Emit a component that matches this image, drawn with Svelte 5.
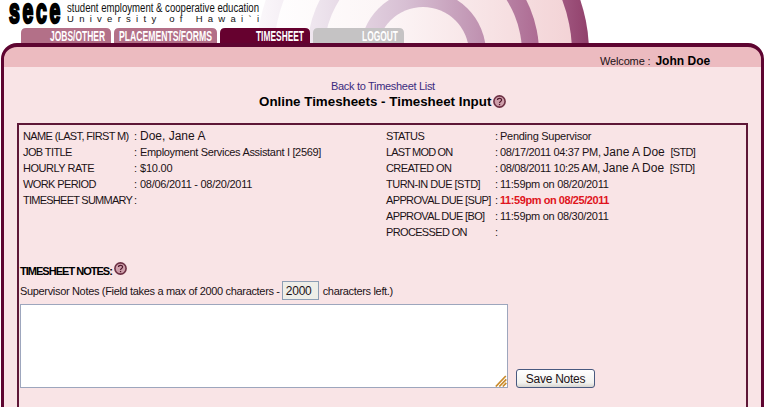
<script>
  const left = [
    { label: 'NAME (LAST, FIRST M)', ls: -0.64, parts: [{ t: 'Doe, Jane A', big: true }] },
    { label: 'JOB TITLE', ls: -0.6, parts: [{ t: 'Employment Services Assistant I [2569]', ls: -0.32 }] },
    { label: 'HOURLY RATE', ls: -0.48, parts: [{ t: '$10.00', ls: -0.2 }] },
    { label: 'WORK PERIOD', ls: -0.6, parts: [{ t: '08/06/2011 - 08/20/2011', ls: -0.27 }] },
    { label: 'TIMESHEET SUMMARY', ls: -0.75, parts: [] }
  ];
  const right = [
    { label: 'STATUS', ls: -0.6, parts: [{ t: 'Pending Supervisor', ls: -0.27 }] },
    { label: 'LAST MOD ON', ls: -0.85, parts: [{ t: '08/17/2011 04:37 PM, ', ls: -0.34 }, { t: 'Jane A Doe ', big: true }, { t: ' [STD]', ls: -0.7 }] },
    { label: 'CREATED ON', ls: -0.6, parts: [{ t: '08/08/2011 10:25 AM, ', ls: -0.34 }, { t: 'Jane A Doe ', big: true }, { t: ' [STD]', ls: -0.7 }] },
    { label: 'TURN-IN DUE [STD]', ls: -0.5, parts: [{ t: '11:59pm on 08/20/2011', ls: -0.29 }] },
    { label: 'APPROVAL DUE [SUP]', ls: -0.64, parts: [{ t: '11:59pm on 08/25/2011', ls: -0.43, alert: true }] },
    { label: 'APPROVAL DUE [BO]', ls: -0.64, parts: [{ t: '11:59pm on 08/30/2011', ls: -0.29 }] },
    { label: 'PROCESSED ON', ls: -0.65, parts: [] }
  ];
  const tabs = [
    { x: 21, w: 90, t: 'JOBS/OTHER', tx: 50, tw: 55, fill: '#b37088' },
    { x: 114, w: 103, t: 'PLACEMENTS/FORMS', tx: 119, tw: 93, fill: '#b37088' },
    { x: 220, w: 90, t: 'TIMESHEET', tx: 256, tw: 48, fill: '#66012f' },
    { x: 313, w: 91, t: 'LOGOUT', tx: 362, tw: 36, fill: '#c5c3c4' }
  ];
</script>

{#snippet help()}
  <svg class="help" width="13" height="13" viewBox="0 0 13 13">
    <circle cx="6.5" cy="6.5" r="5.6" fill="#cf9fab" stroke="#6d3044" stroke-width="1.6" />
    <path d="M4.5 5.1 C4.5 2.7 8.7 2.7 8.6 5 C8.5 6.5 6.6 6.4 6.5 8" fill="none" stroke="#50182c" stroke-width="1.2" />
    <rect x="5.9" y="8.9" width="1.3" height="1.3" fill="#50182c" />
  </svg>
{/snippet}

{#snippet table(rows, cls)}
  <dl class={cls}>
    {#each rows as row}
      <dt style:letter-spacing="{row.ls}px">{row.label}</dt>
      <dd><span class="colon">:</span>{#each row.parts as p}<span class:big={p.big} class:alert={p.alert} style:letter-spacing="{p.ls ?? 0}px">{p.t}</span>{/each}</dd>
    {/each}
  </dl>
{/snippet}

<div class="page">
  <svg class="banner" width="766" height="43" viewBox="0 0 766 43">
    <defs>
      <linearGradient id="ring" gradientUnits="userSpaceOnUse" x1="257" y1="0" x2="589" y2="0">
        <stop offset="0" stop-color="#fbf8fb" />
        <stop offset=".2" stop-color="#ece2ec" />
        <stop offset=".45" stop-color="#d7bfd3" />
        <stop offset=".66" stop-color="#c195b3" />
        <stop offset=".84" stop-color="#ae6d94" />
        <stop offset="1" stop-color="#91406b" />
      </linearGradient>
      <linearGradient id="disc" gradientUnits="userSpaceOnUse" x1="257" y1="0" x2="589" y2="0">
        <stop offset="0" stop-color="#ffffff" />
        <stop offset=".4" stop-color="#fcf5f6" />
        <stop offset="1" stop-color="#f2d0d3" />
      </linearGradient>
    </defs>
    <circle cx="423" cy="53" r="166" fill="url(#ring)" />
    <circle cx="423" cy="53" r="149" fill="url(#disc)" />
    <circle cx="423" cy="53" r="116" fill="url(#ring)" />
    <circle cx="423" cy="53" r="99" fill="url(#disc)" />
    <circle cx="423" cy="53" r="63" fill="url(#ring)" />
    <circle cx="423" cy="53" r="46" fill="url(#disc)" />
    <text class="logo" transform="translate(9 23) scale(.54 1)" textLength="95" lengthAdjust="spacing">sece</text>
    <text class="tag" x="67" y="12" textLength="192" lengthAdjust="spacingAndGlyphs">student employment &amp; cooperative education</text>
    <text class="uni" x="67" y="22" textLength="192">University of Hawai`i</text>
    {#each tabs as tab}
      <path d="M{tab.x} 43V33Q{tab.x} 28 {tab.x + 5} 28H{tab.x + tab.w - 5}Q{tab.x + tab.w} 28 {tab.x + tab.w} 33V43Z" fill={tab.fill} />
      <text class="tab" x={tab.tx} y="41" textLength={tab.tw} lengthAdjust="spacingAndGlyphs">{tab.t}</text>
    {/each}
  </svg>

  <main>
    <div class="welcome"><span>Welcome :</span><b>John Doe</b></div>
    <div class="back"><a>Back to Timesheet List</a></div>
    <h1><span>Online Timesheets - Timesheet Input</span>{@render help()}</h1>
    <section>
      <div class="info">
        {@render table(left, 'left')}
        {@render table(right, 'right')}
      </div>
      <h2><span>TIMESHEET NOTES:</span>{@render help()}</h2>
      <div class="limit">
        <span>Supervisor Notes (Field takes a max of 2000 characters -</span>
        <span class="count">2000</span>
        <span>characters left.)</span>
      </div>
      <div class="entry">
        <div class="area">
          <svg width="12" height="12" viewBox="0 0 12 12">
            <path d="M.8 11.5L10.8 1M4.3 11.5L11.3 4.3M7.8 11.5L11.3 7.9" stroke="#c98a2b" stroke-width="1.7" />
          </svg>
        </div>
        <button>Save Notes</button>
      </div>
    </section>
  </main>
</div>

<style>
  .page {
    width: 766px;
    height: 407px;
    overflow: hidden;
    background: #fff;
    color: #1c1216;
    font: 11px/16px "Liberation Sans", Arial, sans-serif;
  }
  .banner { display: block; }
  .logo { font: bold 36px "Liberation Sans", Arial, sans-serif; fill: #000; stroke: #000; stroke-width: 2.6px; }
  .tag { font: 12.5px "Liberation Sans", Arial, sans-serif; fill: #111; }
  .uni { font: 9.5px "Liberation Sans", Arial, sans-serif; fill: #111; }
  .tab { font: bold 14px "Liberation Sans", Arial, sans-serif; fill: #fff; }
  main {
    box-sizing: border-box;
    width: 763px;
    height: 400px;
    margin-left: 1px;
    border: 3px solid #5e0531;
    border-top-width: 4px;
    border-radius: 16px 16px 0 0;
    background: linear-gradient(#ecbbc0 20px, #f9e4e6 20px);
  }
  .welcome {
    display: flex;
    height: 27px;
    padding-left: 596px;
    line-height: 28px;
    letter-spacing: -.15px;
  }
  .welcome b { margin-left: 5px; font-size: 12px; letter-spacing: .02px; color: #000; }
  .back { height: 16px; padding: 4px 0 0 327px; letter-spacing: -.31px; }
  .back a { color: #3b2b80; }
  h1 {
    display: flex;
    align-items: center;
    height: 16px;
    margin: 0 0 0 255px;
    font-size: 13.35px;
    line-height: 16px;
    color: #000;
  }
  .help { flex: none; margin: 0 0 1px 2px; }
  section {
    box-sizing: border-box;
    width: 731px;
    height: 310px;
    margin: 13px 0 0 13px;
    border: 2px solid #5e1737;
  }
  .info { display: flex; height: 136px; padding: 3px 0 0 4px; }
  dl { display: grid; grid-auto-rows: 16px; margin: 0; white-space: pre; }
  .left { grid-template-columns: 111px 252px; }
  .right { grid-template-columns: 109px 250px; }
  dt, dd { margin: 0; }
  dd { display: flex; }
  .colon { width: 6px; }
  .right .colon { width: 5px; }
  .big { font-size: 12px; }
  .alert { font-weight: bold; color: #e0141c; }
  h2 {
    display: flex;
    align-items: center;
    height: 14px;
    margin: -2px 0 0 1px;
    font-size: 11px;
    color: #000;
    letter-spacing: -.98px;
  }
  h2 span { padding-top: 3px; }
  .limit {
    display: flex;
    align-items: center;
    height: 20px;
    margin: 5px 0 3px 1px;
    letter-spacing: -.33px;
  }
  .count {
    box-sizing: border-box;
    width: 37px;
    height: 19px;
    margin: 0 4px 1px 2px;
    padding-left: 3px;
    border: 1px solid #8d9fb5;
    background: #eeeee8;
    font-size: 12px;
    line-height: 18px;
    letter-spacing: -.2px;
  }
  .entry { display: flex; align-items: flex-end; margin-left: 1px; }
  .area {
    box-sizing: border-box;
    display: flex;
    align-items: flex-end;
    justify-content: flex-end;
    width: 488px;
    height: 84px;
    border: 1px solid #9da6bd;
    background: #fff;
  }
  button {
    width: 79px;
    height: 19px;
    margin: 0 0 0 8px;
    padding: 0;
    border: 1px solid #48597f;
    border-radius: 3px;
    background: linear-gradient(#fff, #f2f2ef 75%, #d7d5d0);
    color: #1c1216;
    font: 12px/16px "Liberation Sans", Arial, sans-serif;
    letter-spacing: -.25px;
  }
</style>
